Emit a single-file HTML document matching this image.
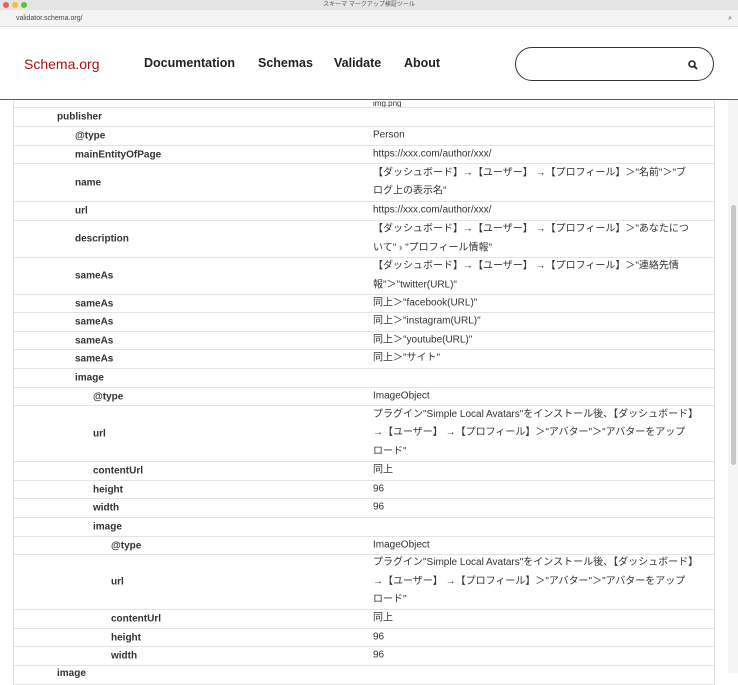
<!DOCTYPE html><html><head><meta charset="utf-8"><style>
*{margin:0;padding:0;box-sizing:border-box}
body{width:738px;height:673px;overflow:hidden;background:#fff;font-family:"Liberation Sans","Noto Sans CJK JP",sans-serif;position:relative;color:#222}
.tb{position:absolute;left:0;top:0;width:738px;height:10px;background:#e4e4e4;font-size:6px;text-align:center;line-height:10px;color:#555}
.dot{position:absolute;top:2px;width:6px;height:6px;border-radius:50%}
.ab{position:absolute;left:0;top:10px;width:738px;height:17px;background:#f3f3f3;border-bottom:1px solid #ddd;font-size:7px;line-height:17px;padding-left:16px;color:#444}
.hd{position:absolute;left:0;top:27px;width:738px;height:73px;border-bottom:1px solid #b33;background:#fff}
.logo{position:absolute;left:24px;top:29px;font-size:14px;color:#a11;}
.nav{position:absolute;top:29px;font-size:12.5px;font-weight:bold;color:#222}
.srch{position:absolute;left:515px;top:20px;width:199px;height:34px;border:1px solid #333;border-radius:17px}
.tbl{position:absolute;left:13px;top:101px;width:702px;border-left:1px solid #ddd;border-right:1px solid #ddd}
.r{position:relative;border-bottom:1px solid #e3e3e3;font-size:10px}
.k{position:absolute;top:50%;transform:translateY(-50%);font-weight:bold;color:#333}
.v{position:absolute;left:359px;top:50%;transform:translateY(-50%);width:322px;line-height:18.6px;color:#333}
.sb{position:absolute;left:728px;top:100px;width:10px;height:573px;background:#f5f5f5}
.th{position:absolute;width:5px;height:260px;background:#c8c8c8;border-radius:3px}
</style></head><body>
<div class="tb">スキーマ マークアップ検証ツール
<span class="dot" style="left:3px;background:#ee5c54"></span><span class="dot" style="left:12px;background:#f5bd3b"></span><span class="dot" style="left:21px;background:#5ac148"></span></div>
<div class="ab">validator.schema.org/<span style="position:absolute;right:6px">⌕</span></div>
<div class="hd">
<div class="logo">Schema.org</div>
<div class="nav" style="left:144px">Documentation</div>
<div class="nav" style="left:258px">Schemas</div>
<div class="nav" style="left:334px">Validate</div>
<div class="nav" style="left:404px">About</div>
<div class="srch"><svg style="position:absolute;left:172px;top:12px" width="10" height="10" viewBox="0 0 10 10"><circle cx="4" cy="4" r="3" stroke="#222" stroke-width="1.6" fill="none"/><path d="M6.2 6.2L9 9" stroke="#222" stroke-width="1.8"/></svg></div>
</div>
<div class="tbl">
<div class="r" style="height:7px"><span class="v" style="font-size:8px;top:0;transform:none;line-height:6px;overflow:hidden;height:6px">img.png</span></div>
<div class="r" style="height:19px"><span class="k" style="left:43px">publisher</span></div>
<div class="r" style="height:19px"><span class="k" style="left:61px">@type</span><span class="v">Person</span></div>
<div class="r" style="height:18px"><span class="k" style="left:61px">mainEntityOfPage</span><span class="v">https://xxx.com/author/xxx/</span></div>
<div class="r" style="height:38px"><span class="k" style="left:61px">name</span><span class="v">【ダッシュボード】→【ユーザー】 →【プロフィール】＞"名前"＞"ブログ上の表示名"</span></div>
<div class="r" style="height:19px"><span class="k" style="left:61px">url</span><span class="v">https://xxx.com/author/xxx/</span></div>
<div class="r" style="height:37px"><span class="k" style="left:61px">description</span><span class="v">【ダッシュボード】→【ユーザー】 →【プロフィール】＞"あなたについて" › "プロフィール情報"</span></div>
<div class="r" style="height:37px"><span class="k" style="left:61px">sameAs</span><span class="v">【ダッシュボード】→【ユーザー】 →【プロフィール】＞"連絡先情報"＞"twitter(URL)"</span></div>
<div class="r" style="height:18px"><span class="k" style="left:61px">sameAs</span><span class="v">同上＞"facebook(URL)"</span></div>
<div class="r" style="height:19px"><span class="k" style="left:61px">sameAs</span><span class="v">同上＞"instagram(URL)"</span></div>
<div class="r" style="height:18px"><span class="k" style="left:61px">sameAs</span><span class="v">同上＞"youtube(URL)"</span></div>
<div class="r" style="height:19px"><span class="k" style="left:61px">sameAs</span><span class="v">同上＞"サイト"</span></div>
<div class="r" style="height:19px"><span class="k" style="left:61px">image</span></div>
<div class="r" style="height:18px"><span class="k" style="left:79px">@type</span><span class="v">ImageObject</span></div>
<div class="r" style="height:56px"><span class="k" style="left:79px">url</span><span class="v">プラグイン"Simple Local Avatars"をインストール後、【ダッシュボード】→【ユーザー】 →【プロフィール】＞"アバター"＞"アバターをアップロード"</span></div>
<div class="r" style="height:19px"><span class="k" style="left:79px">contentUrl</span><span class="v">同上</span></div>
<div class="r" style="height:18px"><span class="k" style="left:79px">height</span><span class="v">96</span></div>
<div class="r" style="height:19px"><span class="k" style="left:79px">width</span><span class="v">96</span></div>
<div class="r" style="height:19px"><span class="k" style="left:79px">image</span></div>
<div class="r" style="height:18px"><span class="k" style="left:97px">@type</span><span class="v">ImageObject</span></div>
<div class="r" style="height:55px"><span class="k" style="left:97px">url</span><span class="v">プラグイン"Simple Local Avatars"をインストール後、【ダッシュボード】→【ユーザー】 →【プロフィール】＞"アバター"＞"アバターをアップロード"</span></div>
<div class="r" style="height:19px"><span class="k" style="left:97px">contentUrl</span><span class="v">同上</span></div>
<div class="r" style="height:18px"><span class="k" style="left:97px">height</span><span class="v">96</span></div>
<div class="r" style="height:19px"><span class="k" style="left:97px">width</span><span class="v">96</span></div>
<div class="r" style="height:19px"><span class="k" style="left:43px;top:2px;transform:none">image</span></div>
</div>
<div class="sb"><div class="th" style="left:3px;top:105px"></div></div>
</body></html>
